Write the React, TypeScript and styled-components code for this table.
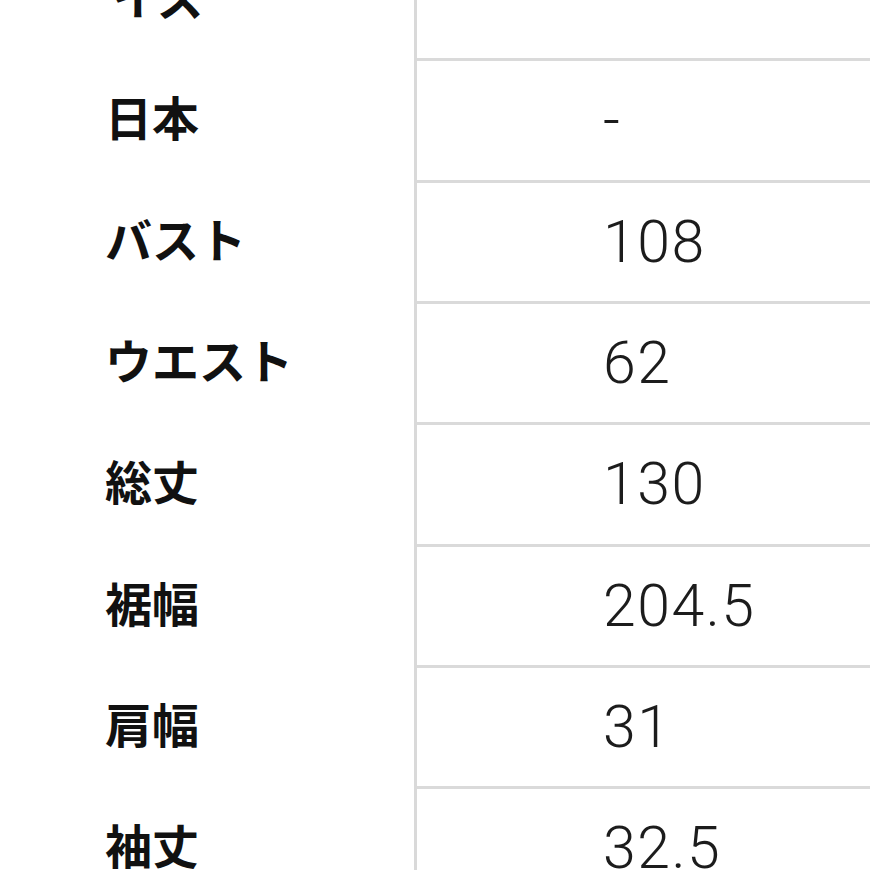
import React, { FC } from "react";
import styled, { createGlobalStyle } from "styled-components";

const GlobalStyle = createGlobalStyle`
  html, body {
    margin: 0;
    padding: 0;
    background: #ffffff;
    overflow: hidden;
  }
  body {
    font-family: "Noto Sans CJK JP", "Noto Sans", sans-serif;
  }
`;

const Page = styled.div`
  width: 870px;
  height: 870px;
  overflow: hidden;
  background: #ffffff;
`;

// the page is scrolled: the first row is partly above the top edge
const SizeTable = styled.div`
  display: flex;
  flex-direction: column;
  margin-top: -60px;
`;

const Row = styled.div`
  display: grid;
  grid-template-columns: 417px 1fr;
  height: 121.33px;
`;

const LabelCell = styled.div<{ indent?: number }>`
  display: flex;
  align-items: center;
  box-sizing: border-box;
  padding-left: ${p => p.indent ?? 105}px;
  padding-bottom: 12px;
  border-right: 3px solid #d9d9d9;
  font-size: 47px;
  font-weight: 700;
  color: #111111;
  white-space: nowrap;
`;

const ValueCell = styled.div`
  display: flex;
  align-items: center;
  box-sizing: border-box;
  padding-left: 186px;
  padding-bottom: 1px;
  border-bottom: 3px solid #dadada;
  font-family: Roboto, "Noto Sans CJK JP", sans-serif;
  font-size: 59px;
  font-weight: 300;
  letter-spacing: 1.5px;
  color: #1c1c1c;
  white-space: nowrap;
`;

type Size = {
  label: string;
  value: string;
  indent?: number;
};

const sizes: Size[] = [
  { label: "イズ", value: "", indent: 112 },
  { label: "日本", value: "-" },
  { label: "バスト", value: "108" },
  { label: "ウエスト", value: "62" },
  { label: "総丈", value: "130" },
  { label: "裾幅", value: "204.5" },
  { label: "肩幅", value: "31" },
  { label: "袖丈", value: "32.5" },
];

const SizeRow: FC<Size> = ({ label, value, indent }) => (
  <Row>
    <LabelCell indent={indent}>{label}</LabelCell>
    <ValueCell>{value}</ValueCell>
  </Row>
);

const App: FC = () => (
  <Page>
    <GlobalStyle />
    <SizeTable>
      {sizes.map(s => (
        <SizeRow key={s.label} label={s.label} value={s.value} indent={s.indent} />
      ))}
    </SizeTable>
  </Page>
);

export default App;
